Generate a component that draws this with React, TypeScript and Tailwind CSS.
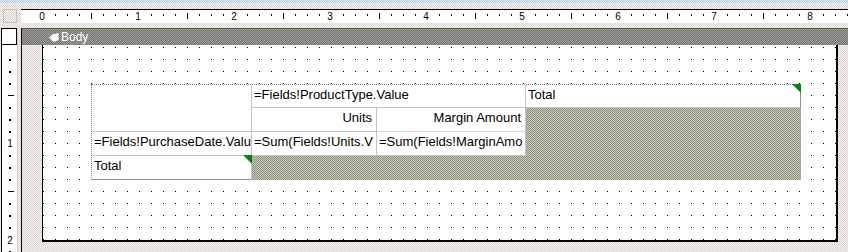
const PAGE_BG = 'bg-[repeating-conic-gradient(#f6f4f2_0_25%,#dfd5d0_0_50%)] [background-size:2px_2px]'
const HEADER_BG = 'bg-[repeating-conic-gradient(#9e9e98_0_25%,#76766c_0_50%)] [background-size:2px_2px]'
const GRAY_CELL = 'bg-[repeating-conic-gradient(#cacac6_0_25%,#8e8e74_0_50%)] [background-size:2px_2px]'
const DOTS =
  'bg-white bg-[linear-gradient(to_bottom,transparent_1px,#fff_1px),linear-gradient(to_right,#000_1px,transparent_1px)] [background-size:12px_12px] [background-position:0px_2px]'

const TOP_TICKS = Array.from({ length: 68 }, (_, j) => j).filter((j) => j % 8 !== 0)
const SIDE_TICKS = Array.from({ length: 17 }, (_, j) => j + 1).filter((j) => j % 8 !== 0)

function Corner() {
  // green marker in the top right of a textbox
  return (
    <span className="absolute -top-px -right-px w-[9px] h-[9px] bg-[#0a800a] [clip-path:polygon(0_0,100%_0,100%_100%)]" />
  )
}

function TopRuler() {
  return (
    <div className="relative flex-1 bg-white border-t border-black overflow-hidden">
      <svg className="absolute left-0 top-0" width="827" height="13">
        {TOP_TICKS.map((j) => (
          <rect
            key={j}
            x={22 + 12 * j}
            y={j % 8 === 4 ? 3 : 4}
            width="1"
            height={j % 8 === 4 ? 6 : 2}
            fill="#000"
          />
        ))}
      </svg>
      {[0, 1, 2, 3, 4, 5, 6, 7, 8].map((n) => (
        <span
          key={n}
          className="absolute top-[2px] w-[10px] -ml-[5px] text-center text-[10px] leading-[10px] text-black"
          style={{ left: 21 + 96 * n }}
        >
          {n}
        </span>
      ))}
    </div>
  )
}

function SideRuler() {
  return (
    <div className="relative shrink-0 ml-px w-[17px] border-l border-black border-r border-r-[#d0ccc8] bg-white">
      <div className="h-[17px] border border-black border-l-0" />
      <svg className="absolute left-0 top-0" width="15" height="224">
        {SIDE_TICKS.map((j) => (
          <rect
            key={j}
            x={j % 8 === 4 ? 6 : 7}
            y={19 + 12 * j}
            width={j % 8 === 4 ? 6 : 2}
            height={j % 8 === 4 ? 1 : 2}
            fill="#000"
          />
        ))}
      </svg>
      <span className="absolute left-[3px] top-[111px] w-[10px] text-center text-[10px] leading-[10px] text-black">1</span>
      <span className="absolute left-[3px] top-[208px] w-[10px] text-center text-[10px] leading-[10px] text-black">2</span>
    </div>
  )
}

function Matrix() {
  const cell = 'relative border-r border-b border-[#c4c4c4] px-[2px] pt-[2px] leading-[15px] whitespace-nowrap overflow-hidden'
  return (
    <div className="w-[710px] grid grid-cols-[160px_125px_149px_275px] grid-rows-[23px_24px_24px_24px] border-t border-l border-dotted border-[#808080] text-[13px] text-black">
      <div className={`${cell} row-span-2 bg-white`} />
      <div className={`${cell} col-span-2 bg-white`}>=Fields!ProductType.Value</div>
      <div className={`${cell} bg-white border-r-[#909090] border-r-dotted overflow-visible`}>
        Total
        <Corner />
      </div>
      <div className={`${cell} bg-white text-right pr-[4px]`}>Units</div>
      <div className={`${cell} bg-white text-right pr-[4px] border-b-[#d8d8d8]`}>Margin Amount</div>
      <div className={`row-span-3 ${GRAY_CELL}`} />
      <div className={`${cell} bg-white`}>=Fields!PurchaseDate.Valu</div>
      <div className={`${cell} bg-white`}>=Sum(Fields!Units.V</div>
      <div className={`${cell} bg-white`}>=Sum(Fields!MarginAmo</div>
      <div className={`${cell} bg-white border-b-dotted border-b-[#909090] overflow-visible`}>
        Total
        <Corner />
      </div>
      <div className={`col-span-2 ${GRAY_CELL}`} />
    </div>
  )
}

export default function App() {
  return (
    <div className={`w-[848px] h-[252px] overflow-hidden flex flex-col font-['Liberation_Sans',Arial,sans-serif] ${PAGE_BG}`}>
      <div className="h-[3px] shrink-0 bg-[repeating-conic-gradient(#b0c8ee_0_25%,#e6eefa_0_50%)] [background-size:2px_2px]" />
      <div className="h-[6px] shrink-0" />

      {/* Horizontal ruler */}
      <div className="flex h-[14px] shrink-0">
        <div className="ml-[3px] w-[14px] h-[14px] border border-[#c8bfbb]" />
        <div className="w-[4px]" />
        <TopRuler />
      </div>
      <div className="h-[5px] shrink-0" />

      <div className="flex flex-1 min-h-0">
        <SideRuler />
        <div className="w-[3px] shrink-0" />

        {/* Report body section */}
        <div className="flex-1 flex flex-col">
          <div className={`h-[17px] shrink-0 flex items-center pl-[27px] gap-[2px] border-l border-black border-t border-t-[#555] text-white text-[12px] ${HEADER_BG}`}>
            <svg width="10" height="9" viewBox="0 0 10 9">
              <path d="M0 4.5 L4 1 L6 1 L9.5 0 L9.5 7 L6 8.5 L4 8.5 Z" fill="#fff" />
            </svg>
            <span className="leading-[12px]">Body</span>
          </div>
          <div className="flex-1 border-l border-black pl-[20px]">
            <div className={`w-[796px] h-[197px] pl-[48px] pt-[39px] border-l border-r-2 border-b-2 border-black ${DOTS}`}>
              <Matrix />
            </div>
          </div>
        </div>
      </div>
    </div>
  )
}
